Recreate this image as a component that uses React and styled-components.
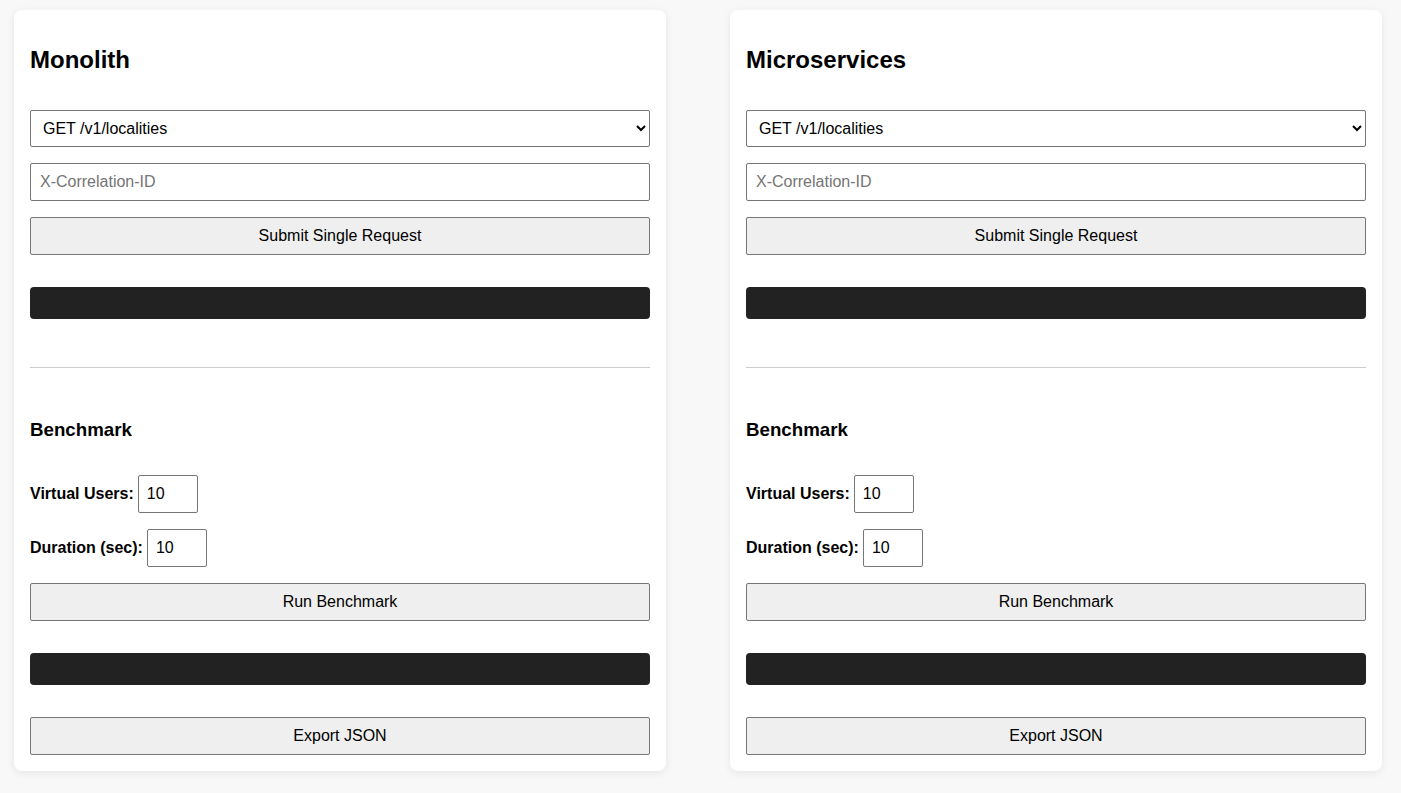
import styled, { createGlobalStyle } from 'styled-components';

const GlobalStyle = createGlobalStyle`
  body {
    margin: 0;
    background: #f8f8f8;
    font-family: 'Liberation Sans', Arial, sans-serif;
    color: #000;
  }
`;

const panels = ['Monolith', 'Microservices'];

const Panel = ({ title }) => (
  <Card>
    <Title>{title}</Title>
    <Select defaultValue='/v1/localities'>
      <option value='/v1/localities'>GET /v1/localities</option>
    </Select>
    <TextInput placeholder='X-Correlation-ID' />
    <Button>Submit Single Request</Button>
    <Output $spaced />
    <Divider />
    <Subtitle>Benchmark</Subtitle>
    <Field>
      <Label>Virtual Users:</Label>
      <NumberInput type='number' defaultValue={10} />
    </Field>
    <Field>
      <Label>Duration (sec):</Label>
      <NumberInput type='number' defaultValue={10} />
    </Field>
    <Button>Run Benchmark</Button>
    <Output $spaced />
    <Button $spaced>Export JSON</Button>
  </Card>
);

const App = () => (
  <>
    <GlobalStyle />
    <Page>
      {panels.map((p) => (
        <Panel key={p} title={p} />
      ))}
    </Page>
  </>
);

const Page = styled.main`
  display: grid;
  grid-template-columns: 652px 652px;
  gap: 64px;
  padding: 10px 14px;
  align-items: start;
`;

const Card = styled.section`
  background: #fff;
  border-radius: 8px;
  box-shadow: 0 2px 8px rgba(0, 0, 0, 0.08);
  padding: 0 16px 16px;
  display: flex;
  flex-direction: column;
  gap: 16px;
`;

const Title = styled.h2`
  font-size: 24px;
  font-weight: bold;
  line-height: 28px;
  margin: 36px 0 20px;
`;

const Subtitle = styled.h3`
  font-size: 18.72px;
  font-weight: bold;
  line-height: 22px;
  margin: 35px 0 18px;
`;

const Select = styled.select`
  height: 37px;
  width: 100%;
  padding: 0 8px;
  font-family: inherit;
  font-size: 16px;
  color: #000;
  background: #fff;
  border: 1px solid #767676;
  border-radius: 2px;
`;

const TextInput = styled.input`
  box-sizing: border-box;
  height: 38px;
  width: 100%;
  padding: 0 9px;
  font-family: inherit;
  font-size: 16px;
  border: 1px solid #767676;
  border-radius: 2px;

  &::placeholder {
    color: #757575;
  }
`;

const Button = styled.button`
  box-sizing: border-box;
  height: 38px;
  width: 100%;
  margin-top: ${({ $spaced }) => ($spaced ? '16px' : '0')};
  font-family: inherit;
  font-size: 16px;
  color: #000;
  background: #efefef;
  border: 1px solid #767676;
  border-radius: 2px;
  cursor: pointer;
`;

const Output = styled.pre`
  height: 32px;
  margin: ${({ $spaced }) => ($spaced ? '16px 0 0' : '0')};
  background: #222;
  border-radius: 4px;
`;

const Divider = styled.hr`
  width: 100%;
  margin: 32px 0 0;
  border: none;
  border-top: 1px solid #ccc;
`;

const Field = styled.div`
  display: flex;
  align-items: center;
  gap: 4px;
`;

const Label = styled.label`
  font-size: 16px;
  font-weight: bold;
`;

const NumberInput = styled.input`
  box-sizing: border-box;
  width: 60px;
  height: 38px;
  padding: 0 8px;
  font-family: inherit;
  font-size: 16px;
  border: 1px solid #767676;
  border-radius: 2px;
  -moz-appearance: textfield;

  &::-webkit-inner-spin-button,
  &::-webkit-outer-spin-button {
    -webkit-appearance: none;
    margin: 0;
  }
`;

export default App;
